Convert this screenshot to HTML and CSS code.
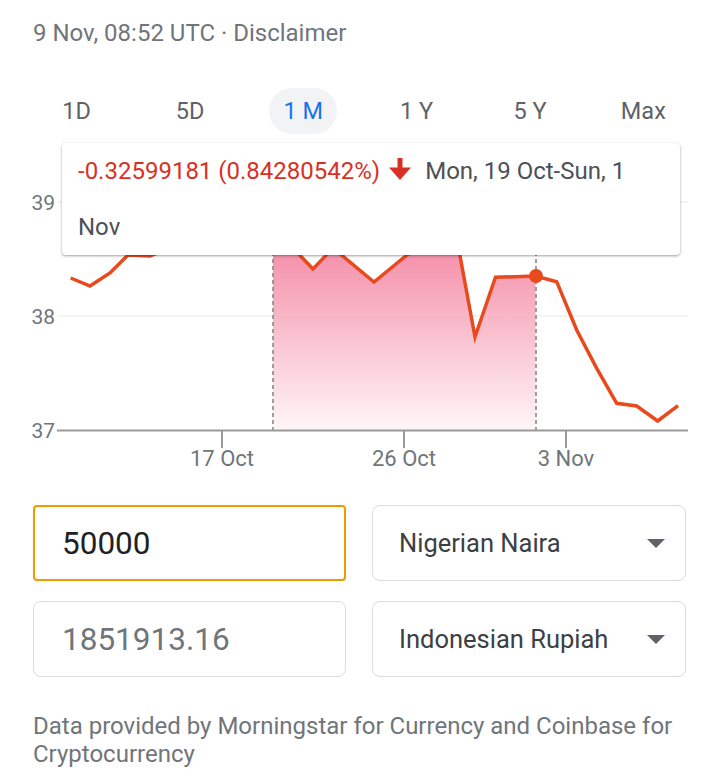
FILE: index.html
```html
<!DOCTYPE html>
<html lang="en">
<head>
<meta charset="utf-8">
<title>Currency converter</title>
<link rel="stylesheet" href="styles.css">
</head>
<body>
<div class="page">
  <div class="stamp">9 Nov, 08:52 UTC · Disclaimer</div>

  <div class="tabs">
    <div class="tab">1D</div>
    <div class="tab">5D</div>
    <div class="tab"><span class="pill">1 M</span></div>
    <div class="tab">1 Y</div>
    <div class="tab">5 Y</div>
    <div class="tab">Max</div>
  </div>

  <div class="chart">
    <svg class="plot" width="720" height="340" viewBox="0 0 720 340">
      <defs>
        <linearGradient id="fillGrad" gradientUnits="userSpaceOnUse" x1="0" y1="100" x2="0" y2="291">
          <stop offset="0" stop-color="#f48aa6"/>
          <stop offset="0.45" stop-color="#f8bccb"/>
          <stop offset="1" stop-color="#fff6f8"/>
        </linearGradient>
      </defs>
      <line x1="57" y1="62" x2="688" y2="62" class="grid"/>
      <line x1="57" y1="176" x2="688" y2="176" class="grid"/>
      <text x="55" y="70" class="ylab">39</text>
      <text x="55" y="184" class="ylab">38</text>
      <text x="55" y="298" class="ylab">37</text>

      <polygon class="area" points="273,89.75 280,95 290,105 313,129 333,108 374,142 407,115 420,108 440,110 458,105 475,197 495.5,137.3 535.5,136 535.5,290.5 273,290.5"/>

      <line x1="273" y1="112" x2="273" y2="290" class="dash"/>
      <line x1="536" y1="112" x2="536" y2="290" class="dash"/>

      <polyline class="line" points="70.7,138 90,146 110,133 128,115 150,116 160,112 180,90 200,75 230,85 260,80 280,95 290,105 313,129 333,108 374,142 407,115 420,108 440,110 458,105 475,197 495.5,137.3 535.5,136 556.7,141.7 576.7,190 596.7,228.3 616.7,263.3 636.7,266 657.7,281 678,265.7"/>
      <circle cx="536" cy="136" r="7" class="dot"/>

      <line x1="57" y1="290.5" x2="688" y2="290.5" class="axis"/>
      <line x1="222" y1="291" x2="222" y2="308" class="axis"/>
      <line x1="404" y1="291" x2="404" y2="308" class="axis"/>
      <line x1="566" y1="291" x2="566" y2="308" class="axis"/>
      <text x="222" y="326" class="xlab">17 Oct</text>
      <text x="404" y="326" class="xlab">26 Oct</text>
      <text x="566" y="326" class="xlab">3 Nov</text>
    </svg>

    <div class="tooltip">
      <div class="tip-row"><span class="change">-0.32599181 (0.84280542%)</span><svg class="down" width="22" height="24" viewBox="0 0 22 24"><rect x="8.5" y="0" width="5" height="13" fill="#d93025"/><polygon points="0,9.5 22,9.5 11,22" fill="#d93025"/></svg><span class="range">Mon, 19 Oct-Sun, 1</span></div>
      <div class="tip-row"><span class="range">Nov</span></div>
    </div>
  </div>

  <div class="converter">
    <div class="field focus"><span class="amount">50000</span></div>
    <div class="field select"><span class="cur">Nigerian Naira</span><span class="caret"></span></div>
    <div class="field"><span class="amount result">1851913.16</span></div>
    <div class="field select"><span class="cur">Indonesian Rupiah</span><span class="caret"></span></div>
  </div>

  <p class="source">Data provided by Morningstar for Currency and Coinbase for Cryptocurrency</p>
</div>
</body>
</html>
```

FILE: styles.css
```css
* { box-sizing: border-box; }
html, body { margin: 0; padding: 0; background: #fff; }
body {
  font-family: Roboto, "Noto Sans", Arial, sans-serif;
  color: #202124;
  width: 720px;
  height: 779px;
  overflow: hidden;
}
.page { padding: 0; }

.stamp {
  padding: 19px 0 0 33px;
  font-size: 24px;
  line-height: 28px;
  color: #70757a;
}

.tabs {
  margin: 41px 20px 0 20px;
  display: grid;
  grid-template-columns: repeat(6, 1fr);
  height: 46px;
}
.tab {
  display: flex;
  align-items: center;
  justify-content: center;
  font-size: 23.5px;
  font-weight: 400;
  color: #5f6368;
}
.pill {
  display: flex;
  align-items: center;
  justify-content: center;
  width: 68px;
  height: 46px;
  border-radius: 23px;
  background: #f1f3f4;
  color: #1a73e8;
}

.chart {
  position: relative;
  margin-top: 6px;
  height: 340px;
}
.plot { display: block; }
.grid { stroke: #f1f1f1; stroke-width: 1.5; }
.axis { stroke: #9a9a9a; stroke-width: 2; }
.ylab {
  font-family: Roboto, Arial, sans-serif;
  font-size: 21px;
  fill: #70757a;
  text-anchor: end;
}
.xlab {
  font-family: Roboto, Arial, sans-serif;
  font-size: 22px;
  fill: #70757a;
  text-anchor: middle;
}
.area { fill: url(#fillGrad); }
.dash { stroke: #888; stroke-width: 1.6; stroke-dasharray: 4 3; }
.line { fill: none; stroke: #e8491d; stroke-width: 3.5; stroke-linejoin: miter; }
.dot { fill: #e8491d; }

.tooltip {
  position: absolute;
  left: 62px;
  top: 3px;
  width: 618px;
  height: 112px;
  padding: 0 30px 0 16px;
  background: #fff;
  border-radius: 4px;
  box-shadow: 0 1px 3px rgba(0, 0, 0, 0.28), 0 1px 2px rgba(0, 0, 0, 0.12);
  font-size: 24px;
  line-height: 56px;
  color: #4d5156;
}
.tip-row { white-space: nowrap; height: 56px; }
.change { color: #d93025; }
.down {
  display: inline-block;
  vertical-align: -3px;
  margin: 0 14px 0 9px;
}

.converter {
  margin: 25px 34px 0 33px;
  display: grid;
  grid-template-columns: 313px 314px;
  column-gap: 26px;
  row-gap: 20px;
}
.field {
  height: 76px;
  border: 1px solid #dadce0;
  border-radius: 8px;
  display: flex;
  align-items: center;
  padding: 0 20px 0 28px;
}
.field.focus {
  border: 2px solid #f29900;
  border-radius: 4px;
  padding-left: 27px;
}
.amount { font-size: 31.5px; color: #202124; }
.amount.result { color: #70757a; }
.select { justify-content: space-between; padding-left: 26px; }
.cur { font-size: 25.5px; color: #3c4043; }
.caret {
  width: 0;
  height: 0;
  border-left: 9px solid transparent;
  border-right: 9px solid transparent;
  border-top: 9px solid #5f6368;
}

.source {
  margin: 35px 20px 0 33px;
  font-size: 24px;
  line-height: 28px;
  color: #70757a;
}
```
